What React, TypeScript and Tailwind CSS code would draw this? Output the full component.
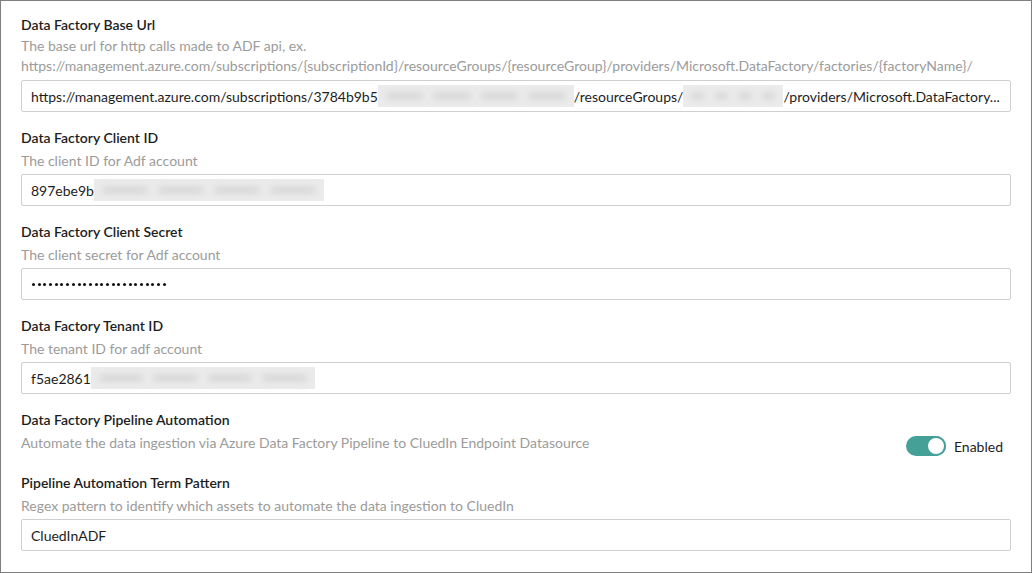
import React from "react";

const Blur = ({ w }: { w: number }) => (
  <span
    className="inline-block h-[22px] align-middle bg-[#ebebeb] overflow-hidden relative"
    style={{ width: w }}
  >
    <span className="absolute inset-x-[8px] top-[8px] h-[6px] flex gap-[10px] blur-[3px]">
      <span className="flex-1 bg-[#d4d4d4] rounded-full" />
      <span className="flex-1 bg-[#d4d4d4] rounded-full" />
      <span className="flex-1 bg-[#d4d4d4] rounded-full" />
      <span className="flex-1 bg-[#d4d4d4] rounded-full" />
    </span>
  </span>
);

const Title = ({ children }: { children: React.ReactNode }) => (
  <div className="text-[14px] leading-[20px] font-semibold text-[#1d1d1d]">{children}</div>
);

const Desc = ({ children }: { children: React.ReactNode }) => (
  <div className="text-[14px] leading-[20px] text-[#9b9b9b] mt-[3px]">{children}</div>
);

const Input = ({ children }: { children: React.ReactNode }) => (
  <div className="mt-[3px] h-[32px] border border-[#cfcfcf] rounded-[2px] bg-white flex items-center px-[9px] text-[14px] text-[#1d1d1d] whitespace-nowrap overflow-hidden">
    {children}
  </div>
);

const dots = Array.from({ length: 24 }, (_, i) => i);

export default function App() {
  return (
    <div
      className="w-[1032px] h-[573px] border border-[#7f7f7f] bg-white overflow-hidden"
      style={{ fontFamily: "Lato, 'Noto Sans', sans-serif" }}
    >
      <div className="pl-[20px] pr-[20px] pt-[14px] flex flex-col">
        <section>
          <Title>Data Factory Base Url</Title>
          <div className="text-[14px] leading-[20px] text-[#9b9b9b] mt-[1px]">
            The base url for http calls made to ADF api, ex.
            <br />
            https://management.azure.com/subscriptions/{"{subscriptionId}"}/resourceGroups/{"{resourceGroup}"}/providers/Microsoft.DataFactory/factories/{"{factoryName}"}/
          </div>
          <div className="mt-[4px] h-[32px] border border-[#cfcfcf] rounded-[2px] bg-white flex items-center px-[9px] text-[14px] text-[#1d1d1d] whitespace-nowrap overflow-hidden">
            <span>https://management.azure.com/subscriptions/3784b9b5</span>
            <Blur w={196} />
            <span>/resourceGroups/</span>
            <Blur w={100} />
            <span>/providers/Microsoft.DataFactory...</span>
          </div>
        </section>

        <section className="mt-[16px]">
          <Title>Data Factory Client ID</Title>
          <Desc>The client ID for Adf account</Desc>
          <Input>
            <span>897ebe9b</span>
            <Blur w={230} />
          </Input>
        </section>

        <section className="mt-[16px]">
          <Title>Data Factory Client Secret</Title>
          <Desc>The client secret for Adf account</Desc>
          <Input>
            <span className="flex items-center gap-[2.7px] pl-[1px]">
              {dots.map((i) => (
                <span key={i} className="w-[3px] h-[3px] rounded-full bg-[#111]" />
              ))}
            </span>
          </Input>
        </section>

        <section className="mt-[16px]">
          <Title>Data Factory Tenant ID</Title>
          <Desc>The tenant ID for adf account</Desc>
          <Input>
            <span>f5ae2861</span>
            <Blur w={224} />
          </Input>
        </section>

        <section className="mt-[16px]">
          <Title>Data Factory Pipeline Automation</Title>
          <div className="flex justify-between items-start">
            <Desc>Automate the data ingestion via Azure Data Factory Pipeline to CluedIn Endpoint Datasource</Desc>
            <div className="mt-[6px] mr-[8px] flex items-center gap-[8px] h-[20px]">
              <div className="w-[40px] h-[20px] rounded-full bg-[#45a197] flex items-center justify-end">
                <div className="w-[20px] h-[20px] rounded-full bg-white border-[2px] border-[#45a197]" />
              </div>
              <span className="text-[14px] text-[#1d1d1d]">Enabled</span>
            </div>
          </div>
        </section>

        <section className="mt-[17px]">
          <Title>Pipeline Automation Term Pattern</Title>
          <Desc>Regex pattern to identify which assets to automate the data ingestion to CluedIn</Desc>
          <Input>
            <span>CluedInADF</span>
          </Input>
        </section>
      </div>
    </div>
  );
}
